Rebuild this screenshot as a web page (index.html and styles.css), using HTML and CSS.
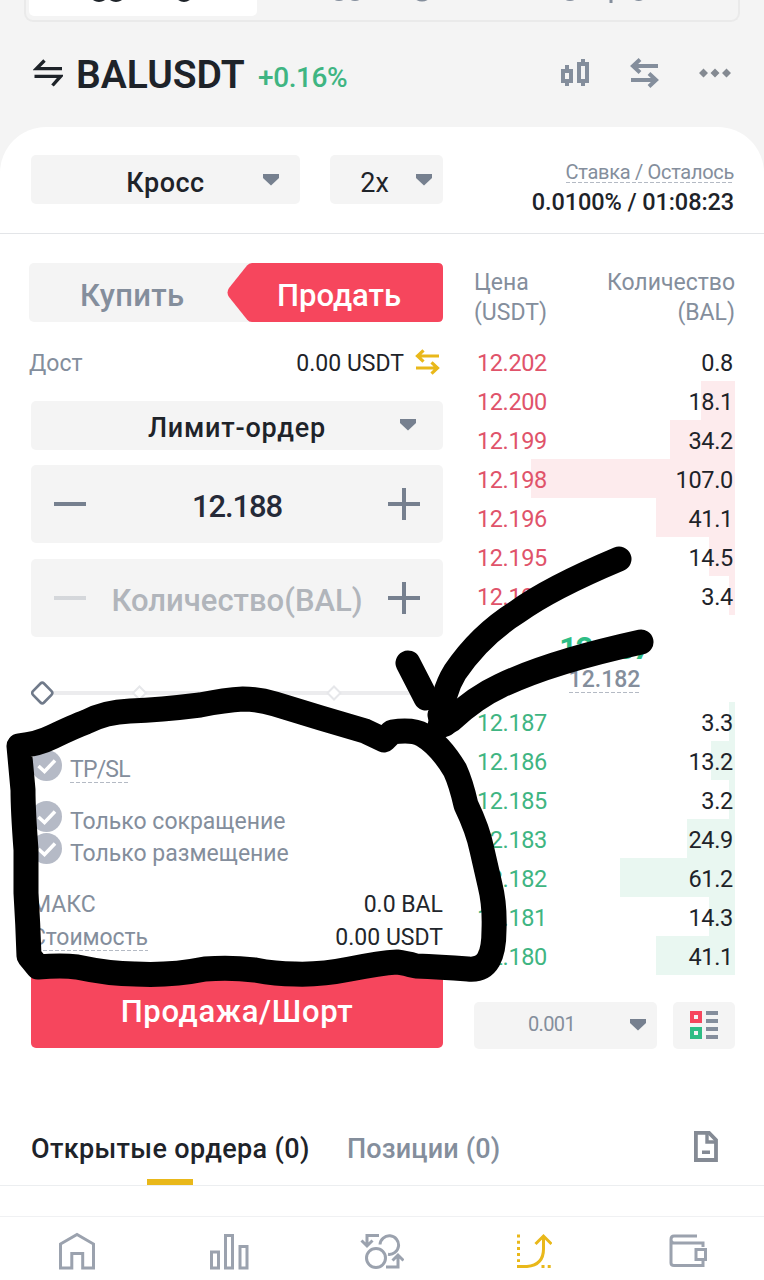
FILE: index.html
```html
<!DOCTYPE html>
<html lang="ru">
<head>
<meta charset="utf-8">
<title>BALUSDT</title>
<link rel="stylesheet" href="styles.css">
</head>
<body>
<div class="phone">
  <header class="top">
    <div class="modes">
      <div class="mode mode-active"></div>
      <svg class="mode-marks" width="716" height="20" viewBox="24 0 716 20" fill="none" stroke-width="3">
        <path d="M94 -1q5 3 10 0M111 -1q5 3 10 0M178 -2q6 5 12 0" stroke="#1e2329"/>
        <path d="M334 -2q5 3 10 0M350 -2q5 3 10 0M416 -2q6 4 12 0M565 -2q5 3 10 0M611 -1v4M634 -2q5 3 9 0" stroke="#848e9c"/>
      </svg>
    </div>
    <div class="pair">
      <svg class="swap" width="30" height="30" viewBox="0 0 30 30" fill="none" stroke="#1e2329" stroke-width="3.4"><path d="M29 9.600H3.500L11.500 1.500M1.500 17.400h26L19.500 26.500"/></svg>
      <h1 class="symbol">BALUSDT</h1>
      <span class="change">+0.16%</span>
      <div class="tools">
        <svg width="28" height="28" viewBox="0 0 28 28" fill="none" stroke="#848e9c" stroke-width="4"><path d="M2 12h8v10H2zM6 6v6M6 22v5M18 5h8v17h-8zM22 0v5M22 22v5"/></svg>
        <svg width="29" height="30" viewBox="0 0 29 30" fill="none" stroke="#848e9c" stroke-width="4"><path d="M28 8H3M10 1.500L3 8l7 6.500M1 22h25M19 15.500l7 6.500-7 6.500"/></svg>
        <svg width="32" height="10" viewBox="0 0 32 10" fill="#848a92"><path d="M4.500 .5L9 5 4.500 9.500 0 5zM16 .5L20.500 5 16 9.500 11.500 5zM27.500 .5L32 5l-4.500 4.500L23 5z"/></svg>
      </div>
    </div>
  </header>

  <section class="sheet">
    <div class="settings">
      <div class="select select-margin"><span class="t-cross">Кросс</span><svg class="caret" width="16" height="12" viewBox="0 0 16 12"><path d="M0 0h16v4L8 11.500 0 4z"/></svg></div>
      <div class="select select-lev"><span class="t-lev">2x</span><svg class="caret" width="16" height="12" viewBox="0 0 16 12"><path d="M0 0h16v4L8 11.500 0 4z"/></svg></div>
      <div class="funding">
        <span class="fund-label dashed">Ставка / Осталось</span>
        <span class="fund-value">0.0100% / 01:08:23</span>
      </div>
    </div>

    <div class="trade">
      <div class="form">
        <div class="toggle">
          <span class="buy">Купить</span>
          <div class="sell">
            <svg width="216" height="59" viewBox="0 0 216 59"><path fill="#f6465d" d="M25 0H211q5 0 5 5V54q0 5-5 5H25q-3 0-5-2.500L2 34q-3-4.500 0-9L20 2.500Q22 0 25 0z"/></svg>
            <span class="sell-label">Продать</span>
          </div>
        </div>
        <div class="avail"><span class="avail-label">Дост</span><span class="avail-value">0.00 USDT</span>
          <svg width="25" height="26" viewBox="0 0 25 26" fill="none" stroke="#e9b81a" stroke-width="3.200"><path d="M24 7H3M8.500 1.300L2.500 7l6 5.700M1 19h21M16.500 13.300l6 5.700-6 5.700"/></svg>
        </div>
        <div class="select select-type"><span class="t-type">Лимит-ордер</span><svg class="caret" width="16" height="12" viewBox="0 0 16 12"><path d="M0 0h16v4L8 11.500 0 4z"/></svg></div>
        <div class="stepper">
          <i class="minus"></i><span class="t-price">12.188</span><i class="plus"></i>
        </div>
        <div class="stepper">
          <i class="minus off"></i><span class="t-qty">Количество(BAL)</span><i class="plus"></i>
        </div>
        <svg class="slider" width="412" height="26" viewBox="0 0 412 26" fill="#fff"><path d="M11 13h401" stroke="#ececee" stroke-width="4"/><g stroke="#e6e7ea" stroke-width="2"><path d="M108.500 6.500l6.500 6.500-6.500 6.500-6.500-6.500zM303 6.500l6.500 6.500-6.500 6.500-6.500-6.500z"/></g><path stroke="#707a8a" stroke-width="2.600" stroke-linejoin="round" d="M9.500 3.500q1.700-1.800 3.500 0l7.500 7.700q1.700 1.800 0 3.600L13 22.500q-1.800 1.800-3.500 0L2 14.800q-1.700-1.800 0-3.600z"/></svg>
        <div class="option opt-tp"><svg class="tick" width="31" height="31" viewBox="0 0 31 31"><circle cx="15.500" cy="15.500" r="15.500"/><path d="M7.500 16l6 5.500L24 10.500"/></svg><span class="o-tp dashed">TP/SL</span></div>
        <div class="option opt-reduce"><svg class="tick" width="31" height="31" viewBox="0 0 31 31"><circle cx="15.500" cy="15.500" r="15.500"/><path d="M7.500 16l6 5.500L24 10.500"/></svg><span class="o-reduce">Только сокращение</span></div>
        <div class="option"><svg class="tick" width="31" height="31" viewBox="0 0 31 31"><circle cx="15.500" cy="15.500" r="15.500"/><path d="M7.500 16l6 5.500L24 10.500"/></svg><span class="o-post">Только размещение</span></div>
        <div class="total total-max"><span class="l-max">МАКС</span><span class="v-max">0.0 BAL</span></div>
        <div class="total"><span class="l-cost dashed">Стоимость</span><span class="v-cost">0.00 USDT</span></div>
        <button class="submit"><span>Продажа/Шорт</span></button>
      </div>

      <div class="book">
        <div class="book-head"><div class="h-price"><span>Цена</span><br><span>(USDT)</span></div><div class="h-qty"><span>Количество</span><br><span>(BAL)</span></div></div>
        <div class="asks">
          <div class="row"><span>12.202</span><b>0.8</b></div>
          <div class="row"><i style="width:34px"></i><span>12.200</span><b>18.1</b></div>
          <div class="row"><i style="width:65px"></i><span>12.199</span><b>34.2</b></div>
          <div class="row"><i style="width:204px"></i><span>12.198</span><b>107.0</b></div>
          <div class="row"><i style="width:79px"></i><span>12.196</span><b>41.1</b></div>
          <div class="row"><i style="width:26px"></i><span>12.195</span><b>14.5</b></div>
          <div class="row"><i style="width:6px"></i><span>12.194</span><b>3.4</b></div>
        </div>
        <div class="mid"><span class="last">12.187</span><span class="mark dashed">12.182</span></div>
        <div class="bids">
          <div class="row"><i style="width:6px"></i><span>12.187</span><b>3.3</b></div>
          <div class="row"><i style="width:24px"></i><span>12.186</span><b>13.2</b></div>
          <div class="row"><i style="width:6px"></i><span>12.185</span><b>3.2</b></div>
          <div class="row"><i style="width:48px"></i><span>12.183</span><b>24.9</b></div>
          <div class="row"><i style="width:115px"></i><span>12.182</span><b>61.2</b></div>
          <div class="row"><i style="width:26px"></i><span>12.181</span><b>14.3</b></div>
          <div class="row"><i style="width:79px"></i><span>12.180</span><b>41.1</b></div>
        </div>
        <div class="book-foot">
          <div class="select select-step"><span class="t-step">0.001</span><svg class="caret" width="16" height="12" viewBox="0 0 16 12"><path d="M0 0h16v4L8 11.500 0 4z"/></svg></div>
          <div class="layout-btn"><svg width="28" height="28" viewBox="0 0 28 28"><path fill="#f6465d" fill-rule="evenodd" d="M0 0h12v12H0zM4 4v4h4V4z"/><path fill="#2ebd85" fill-rule="evenodd" d="M0 16h12v12H0zM4 20v4h4v-4z"/><path fill="#848e9c" d="M16 0h12v4H16zM16 8h12v4H16zM16 16h12v4H16zM16 24h12v4H16z"/></svg></div>
        </div>
      </div>
    </div>

    <div class="orders">
      <div class="tab tab-open"><span>Открытые ордера (0)</span></div>
      <div class="tab tab-pos"><span>Позиции (0)</span></div>
      <svg class="doc" width="24" height="31" viewBox="0 0 24 31" fill="none" stroke="#848a94" stroke-width="3.800"><path d="M1.900 1.900h13.200L22 9v20H1.900z"/><path d="M13 2v9h9M8 21.200h8" stroke-width="3.400"/></svg>
    </div>

    <nav class="nav">
      <svg width="36" height="38" viewBox="0 0 36 38"><path d="M1.500 12L18 2.500 34.500 12v24H23.700V21.500H12.800V36H1.500z"/></svg>
      <svg width="39" height="38" viewBox="0 0 39 38"><path d="M1.500 20h7v16h-7zM15.500 3.500h7V36h-7zM30 14.500h7V36h-7z"/></svg>
      <svg width="44" height="38" viewBox="0 0 44 38"><path d="M19 3.500H7v11M1.500 8.500L7 14l5.500-5.500M20 12.500a9.300 9.300 0 1 1 8 9.800M26 35h12V23M32.500 28.500L38 23l5.500 5.500"/><circle cx="16" cy="26" r="9.500"/></svg>
      <svg class="nav-on" width="36" height="38" viewBox="0 0 36 38"><path d="M1 34.500h10Q27.500 33 27.500 17V4M19.500 12l8-8 8 8"/><path stroke-dasharray="3 3.200" d="M2.500 2.500V30M25.500 34.500h10"/></svg>
      <svg width="38" height="38" viewBox="0 0 38 38"><path d="M28 4H5Q2 4 2 7.500V31q0 2.500 3 2.500h29V29M2 7.500Q2 11 5 11h29v4M27 17.500h9.500v10H27z"/></svg>
    </nav>
  </section>

  <svg class="drawing" width="764" height="1280" viewBox="0 0 764 1280" fill="none" stroke="#000" stroke-width="25" stroke-linecap="round" stroke-linejoin="round">
    <path d="M19 746Q38 744 52 737Q75 726 86 722Q105 712 130 711Q160 710 200 705Q225 700 243 699Q258 699 275 704Q320 718 365 731L384 740L392 732Q413 729 423 735Q440 745 455 770Q461 783 466 805Q478 830 482 850L490 885Q495 905 494 930C494 955 488 971 468 969Q440 967 416 966Q405 963 397 962Q380 963 350 969Q320 975 295 974Q275 974 255 970Q230 967 205 969Q170 976 135 974Q110 974 77 967Q62 965 38 967L29 956Q28 925 26 893L26 850Q23 810 23 790L19 746"/>
    <path d="M619 559Q550 588 517 612Q480 635 455 672Q442 693 441 722"/>
    <path d="M641 642Q550 662 500 686Q476 697 451 720L440 726"/>
    <path d="M408 663L426 698"/>
    <path d="M440 715L445 724"/>
  </svg>
</div>
</body>
</html>
```

FILE: styles.css
```css
* { box-sizing: border-box; }
body {
  margin: 0;
  background: #f4f4f4;
  font-family: Roboto, "Noto Sans", sans-serif;
  color: #1e2329;
}
svg { display: block; flex: none; }
span, b { white-space: nowrap; }

.phone {
  position: relative;
  width: 764px;
  height: 1280px;
  overflow: hidden;
  background: #f4f4f4;
}

/* header */
.top { height: 127px; }
.modes {
  position: relative;
  height: 22px;
  margin: 0 24px;
  padding: 0 3px 4px;
  border: 2px solid #eaeaea;
  border-top: 0;
  border-radius: 0 0 9px 9px;
}
.mode { height: 16px; width: 228px; }
.mode-active { background: #fff; border-radius: 0 0 5px 5px; }
.mode-marks { position: absolute; left: -2px; top: 0; }
.pair {
  display: flex;
  align-items: center;
  height: 60px;
  margin-top: 22px;
  padding: 0 33px 0 33px;
}
.swap { margin-top: -1px; }
.symbol {
  margin: 1px 0 0 13px;
  width: 168px;
  font-size: 39px;
  line-height: 60px;
  font-weight: 600;
  white-space: nowrap;
}
.change {
  margin: 7px 0 0 14px;
  font-size: 28px;
  line-height: 40px;
  font-weight: 500;
  letter-spacing: -.4px;
  color: #3fb582;
}
.tools {
  display: flex;
  align-items: center;
  gap: 41px;
  margin: -3px 0 0 auto;
}
.tools svg:nth-child(2) { margin: 0 -1px 0 1px; }
.tools svg:first-child { margin-right: -1px; }

/* sheet */
.sheet {
  height: 1153px;
  background: #fff;
  border-radius: 46px 46px 0 0;
}
.settings {
  display: flex;
  height: 107px;
  padding: 28px 30px 0 31px;
  border-bottom: 1px solid #e3e5e8;
}
.select {
  display: flex;
  justify-content: center;
  position: relative;
  height: 49px;
  background: #f4f4f4;
  border-radius: 5px;
}
.caret { position: absolute; right: 21px; top: 19px; fill: #76808f; }
.select-margin { width: 269px; }
.select-lev { width: 113px; margin-left: 30px; }
.select-lev .caret { right: 11px; }
.t-cross, .t-lev, .t-type { font-size: 27px; line-height: 56px; }
.t-cross { font-weight: 500; letter-spacing: .5px; }
.t-lev { margin-right: 24px; }
.funding { margin-left: auto; display: flex; flex-direction: column; align-items: flex-end; }
.dashed {
  background: repeating-linear-gradient(90deg, #b4bac4 0 4px, transparent 4px 6px) left bottom / 100% 1px no-repeat;
}
.fund-label { margin-top: 6px; font-size: 20px; line-height: 22px; letter-spacing: -.3px; color: #848e9c; }
.fund-value { margin-top: 8px; font-size: 23.500px; line-height: 22px; font-weight: 500; letter-spacing: -.1px; }

.trade { display: flex; height: 868px; padding: 29px 29px 0 31px; gap: 31px; }
.form { width: 412px; }
.toggle {
  display: flex;
  width: 414px;
  height: 59px;
  margin-left: -2px;
  background: #f4f4f4;
  border-radius: 5px;
}
.buy { width: 198px; padding-left: 51px; font-size: 31px; line-height: 65px; letter-spacing: .3px; color: #848e9c; font-weight: 500; }
.sell { display: grid; }
.sell > * { grid-area: 1 / 1; }
.sell-label { padding-left: 50px; font-size: 31px; line-height: 65px; color: #fff; font-weight: 500; }
.avail { display: flex; align-items: center; height: 40px; margin: 22px 3px 0 -2px; font-size: 23px; line-height: 40px; }
.avail-label { color: #848e9c; }
.avail-value { margin-left: auto; margin-right: 11px; }
.avail svg { margin-top: -4px; }
.select-type { margin-top: 17px; }
.select-type .caret { right: 27px; top: 18px; }
.select .t-type { line-height: 54px; font-weight: 500; letter-spacing: .8px; }
.stepper {
  display: flex;
  align-items: center;
  justify-content: space-between;
  height: 78px;
  margin-top: 15px;
  padding: 0 23px;
  background: #f4f4f4;
  border-radius: 5px;
}
.stepper + .stepper { margin-top: 16px; }
.stepper span { font-size: 31px; line-height: 40px; margin-top: 5px; }
.minus, .plus { width: 32px; height: 32px; background: linear-gradient(#76808f, #76808f) center / 32px 4px no-repeat; }
.plus { background: linear-gradient(#76808f, #76808f) center / 32px 4px no-repeat, linear-gradient(#76808f, #76808f) center / 4px 32px no-repeat; }
.off { opacity: .25; }
.stepper .t-price { font-weight: 500; letter-spacing: -1.1px; color: #252a38; }
.t-qty { color: #b1b5bb; font-weight: 500; }
.slider { margin-top: 43px; }
.option { display: flex; height: 32px; font-size: 23px; line-height: 32px; color: #848e9c; }
.option span { margin: 5px 0 0 8px; }
.tick circle { fill: #b5bac6; }
.tick path { fill: none; stroke: #fff; stroke-width: 3.500; }
.opt-tp { height: 51px; margin-top: 44px; }
.option .o-tp { height: 29px; margin-top: 4px; letter-spacing: -.8px; }
.total { display: flex; justify-content: space-between; height: 33px; font-size: 23px; line-height: 32px; color: #22262c; }
.total-max { margin-top: 24px; }
.l-max, .l-cost { color: #848e9c; }
.l-cost { height: 29px; letter-spacing: -.1px; }
.submit {
  display: block;
  width: 412px;
  height: 77px;
  margin: 16px 0 0;
  padding: 4px 0 0;
  border: 0;
  border-radius: 5px;
  background: #f6465d;
  color: #fff;
  font: 500 31px/68px Roboto, sans-serif;
  letter-spacing: .65px;
}

/* order book */
.book { width: 261px; }
.book-head { display: flex; justify-content: space-between; padding: 5px 0 0 0; font-size: 23px; line-height: 30px; color: #848e9c; }
.h-qty { text-align: right; }
.asks { margin-top: 14px; }
.row {
  position: relative;
  display: flex;
  justify-content: space-between;
  height: 39px;
  padding: 0 2px 0 3px;
  font-size: 23.500px;
  line-height: 43px;
}
.row i { position: absolute; right: 0; top: 0; height: 39px; background: #fdebed; }
.row span { position: relative; letter-spacing: -.4px; }
.row b { position: relative; font-weight: 400; letter-spacing: -.3px; }
.asks span { color: #e0536a; }
.bids i { background: #e9f7f1; }
.bids span { color: #3fb582; }
.mid { height: 87px; display: flex; flex-direction: column; align-items: center; }
.last { margin: 16px 0 0 0; font-size: 31px; line-height: 36px; font-weight: 700; letter-spacing: -1.200px; color: #2ebd85; }
.mark { font-size: 23px; line-height: 25px; height: 26px; font-weight: 500; color: #848e9c; }
.book-foot { display: flex; gap: 16px; margin-top: 27px; }
.select-step { width: 183px; height: 47px; }
.select-step .caret { right: 11px; top: 17px; }
.t-step { margin-right: 28px; font-size: 20px; line-height: 44px; letter-spacing: -.6px; color: #848e9c; }
.layout-btn { width: 62px; height: 47px; padding: 9px 0 0 17px; background: #f4f4f4; border-radius: 5px; }

/* orders tabs */
.orders {
  display: flex;
  height: 84px;
  padding: 0 46px 0 31px;
  border-bottom: 1px solid #eceef0;
}
.tab { font-size: 27px; line-height: 95px; font-weight: 500; }
.tab-open {
  width: 278px;
  letter-spacing: .35px;
  background: linear-gradient(#e9b81a, #e9b81a) center bottom / 46px 6px no-repeat;
}
.tab-pos { margin-left: 38px; letter-spacing: .15px; color: #848e9c; }
.doc { margin: 29px 0 0 auto; }

/* bottom navigation */
.nav {
  display: flex;
  justify-content: space-between;
  height: 64px;
  margin-top: 30px;
  padding: 15px 57px 0 59px;
  border-top: 1px solid #f0f1f3;
}
.nav svg:nth-child(2) { margin: 0 -1px 0 1px; }
.nav svg:nth-child(3) { margin: 0 2px 0 -2px; }
.nav svg:nth-child(4) { margin: 0 3px 0 -3px; }
.nav path, .nav circle { fill: none; stroke: #9ba2ae; stroke-width: 3; }
.nav .nav-on path { stroke: #e9b81a; }

/* hand-drawn marker */
.drawing { position: absolute; left: 0; top: 0; }
```
